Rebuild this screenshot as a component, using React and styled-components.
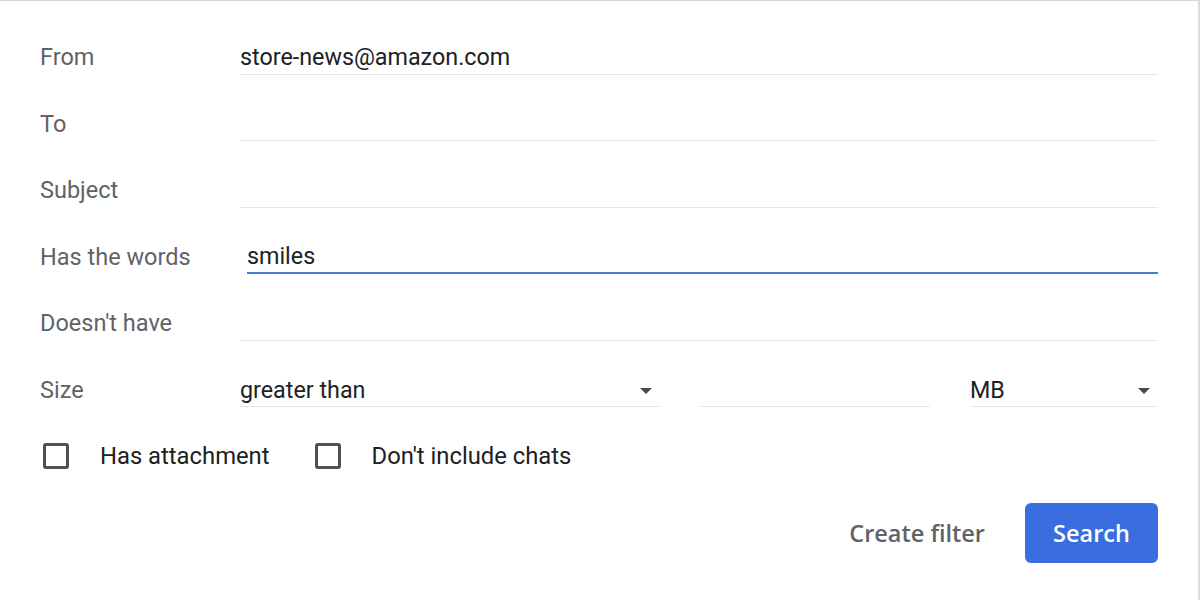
import React from "react";
import styled, { createGlobalStyle } from "styled-components";

const GlobalStyle = createGlobalStyle`
  html, body {
    margin: 0;
    padding: 0;
    background: #ffffff;
  }
  body {
    font-family: Roboto, "Liberation Sans", sans-serif;
  }
`;

const Panel = styled.div`
  width: 1200px;
  height: 600px;
  box-sizing: border-box;
  border-top: 1px solid #d6d6d6;
  border-right: 2px solid #dcdcdc;
  padding: 23px 40px 0 40px;
  background: #ffffff;
`;

const Row = styled.div`
  display: grid;
  grid-template-columns: 200px 1fr;
  align-items: center;
  height: 66.5px;
`;

const Label = styled.div`
  font-size: 23.5px;
  color: #5f6368;
`;

const Field = styled.div`
  height: 34px;
  box-sizing: border-box;
  margin-left: ${(p) => (p.$focused ? "7px" : "0")};
  margin-top: 1px;
  border-bottom: ${(p) => (p.$focused ? "2px solid #4d79d6" : "1px solid #e6e6e6")};
  font-size: 23.3px;
  line-height: 30px;
  color: #202124;
  display: flex;
  align-items: center;
  justify-content: space-between;
`;

const SizeGrid = styled.div`
  display: grid;
  grid-template-columns: 420px 230px 188px;
  column-gap: 40px;
`;

const Caret = styled.span`
  width: 0;
  height: 0;
  border-left: 6px solid transparent;
  border-right: 6px solid transparent;
  border-top: 6px solid #4a4a4a;
  margin-right: 8px;
  margin-top: 2px;
`;

const CheckRow = styled.div`
  display: flex;
  align-items: center;
  height: 66.5px;
`;

const CheckItem = styled.label`
  display: flex;
  align-items: center;
  margin-right: 42px;
  font-size: 23.8px;
  color: #202124;
`;

const Box = styled.span`
  width: 26px;
  height: 26px;
  box-sizing: border-box;
  border: 3px solid #505050;
  border-radius: 3px;
  margin-left: 3px;
  margin-right: 31px;
`;

const Actions = styled.div`
  display: flex;
  justify-content: flex-end;
  align-items: center;
  gap: 26px;
  margin-top: 13px;
`;

const TextButton = styled.button`
  border: none;
  background: none;
  font-family: "Open Sans", Roboto, sans-serif;
  font-size: 23.5px;
  font-weight: 600;
  color: #5f6368;
  padding: 0 14px;
  height: 60px;
`;

const PrimaryButton = styled.button`
  border: none;
  background: #3a6de0;
  color: #ffffff;
  font-family: "Open Sans", Roboto, sans-serif;
  font-size: 23.5px;
  font-weight: 600;
  width: 133px;
  height: 60px;
  border-radius: 6px;
`;

const rows = [
  { label: "From", value: "store-news@amazon.com" },
  { label: "To", value: "" },
  { label: "Subject", value: "" },
  { label: "Has the words", value: "smiles", focused: true },
  { label: "Doesn't have", value: "" },
];

export default function App() {
  return (
    <>
      <GlobalStyle />
      <Panel>
        {rows.map((r) => (
          <Row key={r.label}>
            <Label>{r.label}</Label>
            <Field $focused={r.focused}>{r.value}</Field>
          </Row>
        ))}
        <Row>
          <Label>Size</Label>
          <SizeGrid>
            <Field>
              greater than
              <Caret />
            </Field>
            <Field />
            <Field>
              MB
              <Caret />
            </Field>
          </SizeGrid>
        </Row>
        <CheckRow>
          <CheckItem>
            <Box />
            Has attachment
          </CheckItem>
          <CheckItem>
            <Box />
            Don't include chats
          </CheckItem>
        </CheckRow>
        <Actions>
          <TextButton>Create filter</TextButton>
          <PrimaryButton>Search</PrimaryButton>
        </Actions>
      </Panel>
    </>
  );
}
